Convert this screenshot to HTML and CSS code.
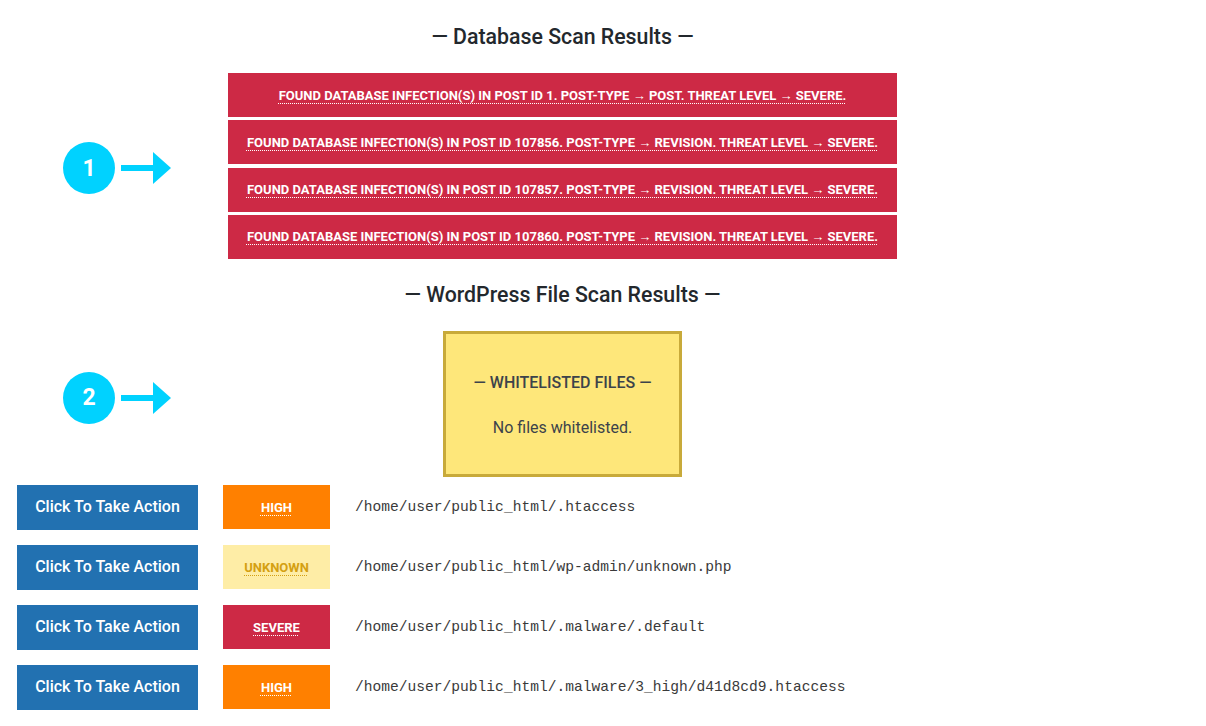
FILE: index.html
```html
<!DOCTYPE html>
<html lang="en">
<head>
<meta charset="utf-8">
<title>Scan Results</title>
<link rel="stylesheet" href="styles.css">
</head>
<body>
<div class="scan">
  <div class="spacer"></div>
  <h2 class="section-title">— Database Scan Results —</h2>

  <div class="marker marker-db">
    <span class="circle">1</span>
    <svg class="arrow" width="50" height="32" viewBox="0 0 50 32"><rect x="0" y="13" width="34" height="6" fill="#00d2ff"/><polygon points="32,0 50,16 32,32" fill="#00d2ff"/></svg>
  </div>
  <div class="bars">
    <div class="bar"><span class="u">Found database infection(s) in post ID 1. Post-type → post. Threat level → SEVERE.</span></div>
    <div class="bar"><span class="u">Found database infection(s) in post ID 107856. Post-type → revision. Threat level → SEVERE.</span></div>
    <div class="bar"><span class="u">Found database infection(s) in post ID 107857. Post-type → revision. Threat level → SEVERE.</span></div>
    <div class="bar"><span class="u">Found database infection(s) in post ID 107860. Post-type → revision. Threat level → SEVERE.</span></div>
  </div>

  <div class="spacer"></div>
  <h2 class="section-title">— WordPress File Scan Results —</h2>

  <div class="marker marker-files">
    <span class="circle">2</span>
    <svg class="arrow" width="50" height="32" viewBox="0 0 50 32"><rect x="0" y="13" width="34" height="6" fill="#00d2ff"/><polygon points="32,0 50,16 32,32" fill="#00d2ff"/></svg>
  </div>
  <div class="box-wrap">
    <div class="whitelist">
      <div class="wl-title">— WHITELISTED FILES —</div>
      <div class="wl-text">No files whitelisted.</div>
    </div>
  </div>
</div>

<div class="files">
  <div class="file-row">
    <button class="action">Click To Take Action</button>
    <span class="badge high"><span class="u">HIGH</span></span>
    <span class="path">/home/user/public_html/.htaccess</span>
  </div>
  <div class="file-row">
    <button class="action">Click To Take Action</button>
    <span class="badge unknown"><span class="u">UNKNOWN</span></span>
    <span class="path">/home/user/public_html/wp-admin/unknown.php</span>
  </div>
  <div class="file-row">
    <button class="action">Click To Take Action</button>
    <span class="badge severe"><span class="u">SEVERE</span></span>
    <span class="path">/home/user/public_html/.malware/.default</span>
  </div>
  <div class="file-row">
    <button class="action">Click To Take Action</button>
    <span class="badge high"><span class="u">HIGH</span></span>
    <span class="path">/home/user/public_html/.malware/3_high/d41d8cd9.htaccess</span>
  </div>
</div>
</body>
</html>
```
FILE: styles.css
```css
* { box-sizing: border-box; }
body {
  margin: 0;
  background: #fff;
  font-family: Roboto, "Liberation Sans", Arial, sans-serif;
  color: #23282d;
}
.scan {
  display: grid;
  grid-template-columns: 228px 669px;
  padding-top: 19px;
}
.section-title {
  margin: 0;
  height: 36px;
  line-height: 36px;
  font-size: 21.3px;
  font-weight: 500;
  text-align: center;
  color: #23282d;
}
.bars {
  margin-top: 18px;
  margin-bottom: 18px;
  display: flex;
  flex-direction: column;
  gap: 3.33px;
}
.bar {
  height: 44px;
  background: #cd2945;
  color: #fff;
  display: flex;
  align-items: center;
  justify-content: center;
  font-size: 13px;
  font-weight: 700;
  text-transform: uppercase;
}
.u {
  text-decoration: underline dotted;
  text-underline-offset: 3px;
  text-decoration-thickness: 1px;
}
.marker {
  display: flex;
  align-items: center;
  gap: 6px;
  padding-left: 63px;
  align-self: start;
}
.marker-db { margin-top: 87px; }
.marker-files { margin-top: 59px; }
.circle {
  width: 52px;
  height: 52px;
  border-radius: 50%;
  background: #00d2ff;
  color: #fff;
  font-size: 23px;
  font-weight: 700;
  display: flex;
  align-items: center;
  justify-content: center;
}
.arrow { display: block; }
.box-wrap {
  display: flex;
  justify-content: center;
  margin-top: 18px;
}
.whitelist {
  width: 239px;
  height: 146px;
  background: #fee77a;
  border: 3px solid #c8aa3a;
  display: flex;
  flex-direction: column;
  align-items: center;
  justify-content: center;
  gap: 25px;
  padding-top: 3px;
  color: #3c434a;
}
.wl-title {
  font-size: 16px;
  font-weight: 500;
  line-height: 20px;
}
.wl-text {
  font-size: 16px;
  line-height: 20px;
}
.files {
  margin-top: 8px;
  padding-left: 17px;
  display: flex;
  flex-direction: column;
  gap: 15px;
}
.file-row {
  display: flex;
  align-items: center;
  gap: 25px;
  height: 45px;
}
.action {
  width: 181px;
  height: 45px;
  border: 0;
  margin: 0;
  background: #2271b1;
  color: #fff;
  font-family: Roboto, "Liberation Sans", Arial, sans-serif;
  font-size: 16px;
  font-weight: 500;
  padding: 0 0 1px 0;
}
.badge {
  width: 107px;
  height: 44px;
  display: flex;
  align-items: center;
  justify-content: center;
  font-size: 13px;
  font-weight: 700;
}
.badge.high { background: #ff8000; color: #fff; }
.badge.severe { background: #cd2945; color: #fff; }
.badge.unknown { background: #feeda6; color: #d4a012; }
.path {
  font-family: "Liberation Mono", "Courier New", monospace;
  font-size: 14.6px;
  color: #3a3a3a;
}
```
